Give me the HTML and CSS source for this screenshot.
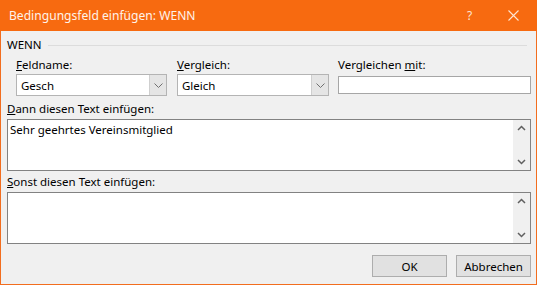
FILE: index.html
```html
<!DOCTYPE html>
<html lang="de">
<head>
<meta charset="utf-8">
<title>Bedingungsfeld einfügen: WENN</title>
<link rel="stylesheet" href="styles.css">
</head>
<body>
<div class="window">
  <div class="titlebar">
    <div class="title">Bedingungsfeld einfügen: WENN</div>
    <div class="tb-btn help">?</div>
    <div class="tb-btn close">
      <svg width="11" height="11" viewBox="0 0 11 11"><path d="M0.5 0.5L10.5 10.5M10.5 0.5L0.5 10.5" stroke="#fde6d4" stroke-width="1.1" fill="none"/></svg>
    </div>
  </div>
  <div class="content">
    <div class="group-header"><span>WENN</span><div class="rule"></div></div>
    <div class="fields">
      <div class="field f1">
        <div class="label"><u>F</u>eldname:</div>
        <div class="combo"><span class="val">Gesch</span>
          <div class="drop"><svg width="9" height="5" viewBox="0 0 9 5"><path d="M0.5 0.5L4.5 4.5L8.5 0.5" stroke="#707070" fill="none"/></svg></div>
        </div>
      </div>
      <div class="field f2">
        <div class="label"><u>V</u>ergleich:</div>
        <div class="combo"><span class="val">Gleich</span>
          <div class="drop"><svg width="9" height="5" viewBox="0 0 9 5"><path d="M0.5 0.5L4.5 4.5L8.5 0.5" stroke="#707070" fill="none"/></svg></div>
        </div>
      </div>
      <div class="field f3">
        <div class="label">Vergleichen <u>m</u>it:</div>
        <div class="input-wrap"><div class="input"></div></div>
      </div>
    </div>
    <div class="label block-label lbl-dann"><u>D</u>ann diesen Text einfügen:</div>
    <div class="textarea">
      <div class="ta-text">Sehr geehrtes Vereinsmitglied</div>
      <div class="scroll">
        <svg width="9" height="6" viewBox="0 0 9 6"><path d="M1 5L4.5 1.5L8 5" stroke="#606060" stroke-width="1.5" fill="none"/></svg>
        <svg width="9" height="6" viewBox="0 0 9 6"><path d="M1 1L4.5 4.5L8 1" stroke="#606060" stroke-width="1.5" fill="none"/></svg>
      </div>
    </div>
    <div class="label block-label lbl-sonst"><u>S</u>onst diesen Text einfügen:</div>
    <div class="textarea">
      <div class="ta-text"></div>
      <div class="scroll">
        <svg width="9" height="6" viewBox="0 0 9 6"><path d="M1 5L4.5 1.5L8 5" stroke="#606060" stroke-width="1.5" fill="none"/></svg>
        <svg width="9" height="6" viewBox="0 0 9 6"><path d="M1 1L4.5 4.5L8 1" stroke="#606060" stroke-width="1.5" fill="none"/></svg>
      </div>
    </div>
    <div class="buttons">
      <div class="btn">OK</div>
      <div class="btn">Abbrechen</div>
    </div>
  </div>
</div>
</body>
</html>
```
FILE: styles.css
```css
* { box-sizing: border-box; }
html, body { margin: 0; padding: 0; }
body {
  width: 537px;
  height: 285px;
  overflow: hidden;
  font-family: "Noto Sans", "Open Sans", sans-serif;
  font-size: 11.5px;
  color: #000;
  background: #f0f0f0;
}
.window {
  width: 537px;
  height: 285px;
  border: 1px solid #f26d1e;
  border-top: none;
  background: #f0f0f0;
  display: flex;
  flex-direction: column;
}
.titlebar {
  height: 31px;
  background: #f76a10;
  margin: 0 -1px;
  display: flex;
  align-items: center;
  color: #fff3ea;
}
.title {
  flex: 1;
  padding-left: 9px;
  font-size: 12.1px;
  padding-bottom: 1px;
}
.tb-btn {
  width: 46px;
  height: 31px;
  display: flex;
  align-items: center;
  justify-content: center;
}
.help { font-size: 12px; color: #fde6d4; width: 44px; padding-left: 3px; }
.close { width: 47px; }
.content {
  padding: 6px 5px 0 6px;
  display: flex;
  flex-direction: column;
}
.group-header {
  height: 16px;
  display: flex;
  align-items: center;
  line-height: 16px;
}
.group-header span { padding-right: 6px; }
.rule {
  flex: 1;
  height: 1px;
  background: #dcdcdc;
  margin-right: 4px;
}
.fields {
  display: flex;
  padding-left: 9px;
  margin-top: 4px;
}
.field { display: flex; flex-direction: column; }
.f1 { width: 151px; margin-right: 10px; }
.f2 { width: 152px; margin-right: 9px; }
.f3 { flex: 1; }
.label {
  height: 16px;
  line-height: 16px;
  white-space: nowrap;
}
.field .label { margin-bottom: 1px; }
.combo {
  height: 22px;
  background: #fff;
  border: 1px solid #b4b4b4;
  display: flex;
  align-items: center;
}
.val { flex: 1; padding-left: 4px; }
.drop {
  width: 17px;
  height: 20px;
  background: #e5e5e5;
  border-left: 1px solid #cfcfcf;
  display: flex;
  align-items: center;
  justify-content: center;
}
.input-wrap { height: 22px; display: flex; align-items: center; }
.input {
  width: 100%;
  height: 18px;
  background: #fff;
  border: 1px solid #a6a6a6;
}
.block-label { margin-top: 5px; margin-bottom: 2px; }
.lbl-sonst { margin-top: 3px; }
.textarea {
  height: 52px;
  background: #fff;
  border: 1px solid #828282;
  display: flex;
}
.ta-text { flex: 1; padding: 2px 2px; line-height: 16px; }
.scroll {
  width: 17px;
  background: #f0f0f0;
  display: flex;
  flex-direction: column;
  justify-content: space-between;
  align-items: center;
  padding: 5px 0 5px;
}
.buttons {
  display: flex;
  justify-content: flex-end;
  gap: 9px;
  margin-top: 11px;
}
.btn {
  width: 75px;
  height: 22px;
  background: #e1e1e1;
  border: 1px solid #adadad;
  display: flex;
  align-items: center;
  justify-content: center;
}
```
